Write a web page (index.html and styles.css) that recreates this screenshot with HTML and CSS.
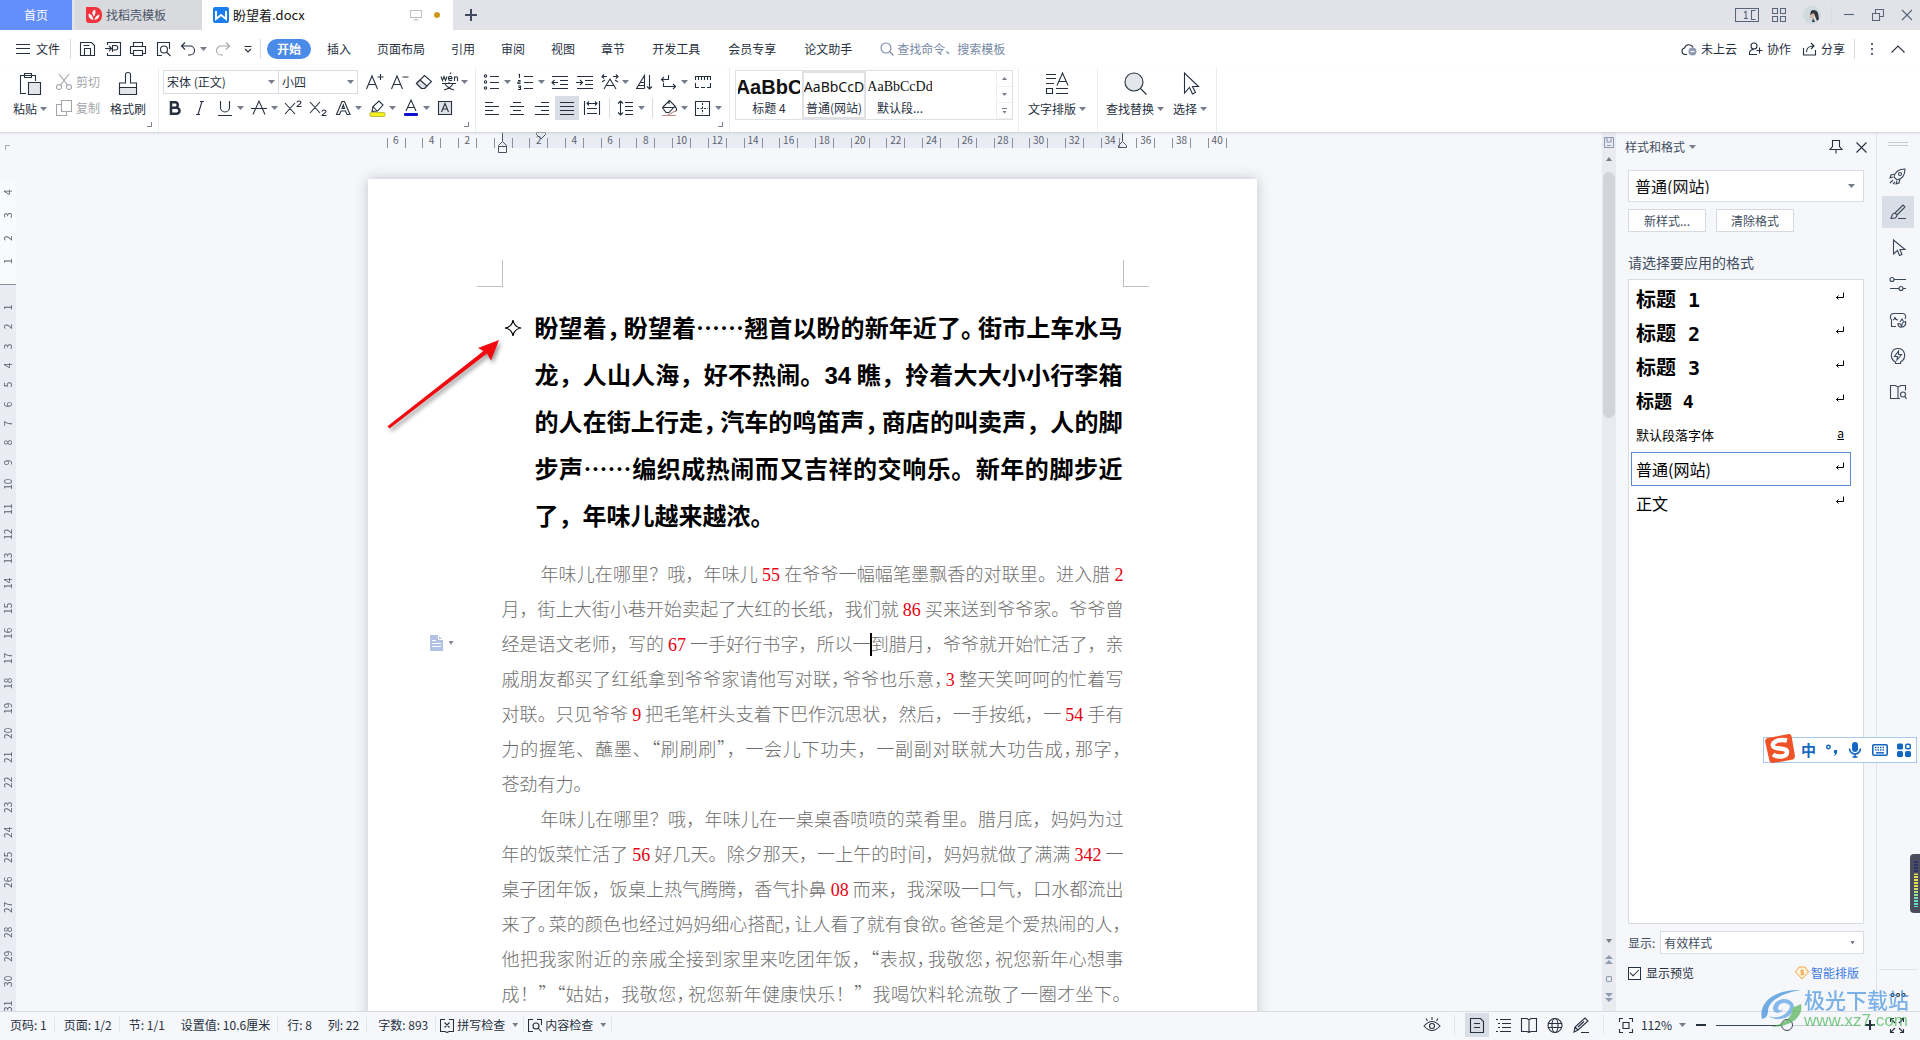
FILE: index.html
```html
<!DOCTYPE html>
<html lang="zh-CN">
<head>
<meta charset="utf-8">
<title>盼望着.docx</title>
<link rel="stylesheet" href="styles.css">
</head>
<body>
<svg class="defs" aria-hidden="true">
  <symbol id="ret" viewBox="0 0 10 10"><path d="M8.500 0.500V5.500H1.500M3.500 3.500L1.500 5.500L3.500 7.500"/></symbol>
</svg>

<header class="titlebar">
  <button class="tab home">首页</button>
  <button class="tab docer">
    <svg width="16" height="16" viewBox="0 0 16 16"><path fill="#f0323c" d="M0 0h9a7 7 0 0 1 7 7v2a7 7 0 0 1-7 7H3a3 3 0 0 1-3-3z"/><path fill="#fff" d="M7.500 13C2.500 12 2 8.500 3 6.500c2.500 1 4 3 4.500 6.500zM7 8C5.500 5.500 7 3.500 9 2.500c1 2 .5 5-1 7zM8.500 13c.5-3 2-4.500 5-5.500 0 3-2 5-5 5.500z"/></svg>
    找稻壳模板</button>
  <button class="tab doc">
    <svg width="16" height="16" viewBox="0 0 16 16"><rect width="16" height="16" rx="2" fill="#1a7df0"/><path d="M3 4v8l5-4 5 4V4" fill="none" stroke="#fff" stroke-width="2"/></svg>
    <span class="name">盼望着.docx</span>
    <svg width="12" height="12" viewBox="0 0 12 12" class="line pale"><path d="M.5 1.500h11v7H.5zM6 8.500v2M3.500 11h5"/></svg>
    <span class="unsaved"></span>
  </button>
  <button class="plus" aria-label="新建"><svg class="line" width="12" height="12" viewBox="0 0 12 12"><path stroke-width="2" d="M6 0v12M0 6h12"/></svg></button>
  <div class="window">
    <svg class="line w24" width="24" height="14" viewBox="0 0 24 14"><path d="M.5.5h23v13H.5zM20.500 2.500h-4v9h4M9 4.500l2-1v7M9 10.500h4"/></svg>
    <svg class="line" width="14" height="14" viewBox="0 0 14 14"><path d="M.5.5h5v5h-5zM8.500.5h5v5h-5zM.5 8.500h5v5h-5zM8.500 8.500h5v5h-5z"/></svg>
    <svg width="18" height="18" viewBox="0 0 18 18"><circle cx="9" cy="9" r="9" fill="#cfdbdd"/><path d="M8 5c2-2 6-1 7 2l1 6-2 2-2-5-2-2-3 1z" fill="#33343c"/><path d="M6 11l4-4 2 2-3 4z" fill="#dcb8a8"/><path d="M10 12l2 4H9z" fill="#33343c"/></svg>
    <span class="sep"></span>
    <button aria-label="最小化"><svg class="line" width="12" height="12" viewBox="0 0 12 12"><path d="M1 5.500h10"/></svg></button>
    <button aria-label="还原"><svg class="line" width="12" height="12" viewBox="0 0 12 12"><path d="M.5 4.500h7v7h-7zM3.500 4V.5h8v7H8"/></svg></button>
    <button aria-label="关闭"><svg class="line" width="12" height="12" viewBox="0 0 12 12"><path d="M1 1l10 10M11 1L1 11"/></svg></button>
  </div>
</header>

<nav class="menu">
  <button class="file"><svg class="line" width="14" height="12" viewBox="0 0 14 12"><path d="M0 1.500h14M0 5.500h14M0 10.500h14"/></svg>文件</button>
  <span class="sep"></span>
  <div class="quick">
    <button aria-label="保存"><svg class="i" viewBox="0 0 24 24"><path d="M4.500 5.500h11l3 3v10h-14zM8.500 18v-6.500h6V18M7.500 8.500h6"/></svg></button>
    <button aria-label="输出PDF"><svg class="i" viewBox="0 0 24 24"><path d="M6.500 8V5.500h13v13h-13V16M4 11.500h6M8 9l2.500 2.500L8 14M11.500 15V8.500h3a2 2 0 0 1 0 4.500h-3"/></svg></button>
    <button aria-label="打印"><svg class="i" viewBox="0 0 24 24"><path d="M7.500 9.500v-4h9v4M7.500 16.500h-3v-7h15v7h-3M7.500 13.500h9v5h-9z"/></svg></button>
    <button aria-label="打印预览"><svg class="i" viewBox="0 0 24 24"><path d="M11 18.500H6.500v-13h12V12"/><circle cx="13" cy="12.500" r="3.500"/><path d="M15.500 15l4 4"/></svg></button>
    <button aria-label="撤销"><svg class="i" viewBox="0 0 24 24"><path d="M9 5.500L5.500 9 9 12.500M6 9h8a4.500 4.500 0 0 1 0 9h-2"/></svg><i class="caret"></i></button>
    <button aria-label="恢复" class="off"><svg class="i" viewBox="0 0 24 24"><path d="M15 5.500L18.500 9 15 12.500M18 9h-8a4.500 4.500 0 0 0 0 9h2"/></svg></button>
    <button aria-label="自定义"><svg class="i" viewBox="0 0 24 24"><path d="M8.500 9.500h7M9 12l3 3 3-3"/></svg></button>
  </div>
  <span class="sep"></span>
  <button class="mt on">开始</button>
  <button class="mt">插入</button>
  <button class="mt">页面布局</button>
  <button class="mt">引用</button>
  <button class="mt">审阅</button>
  <button class="mt">视图</button>
  <button class="mt">章节</button>
  <button class="mt wide">开发工具</button>
  <button class="mt wide">会员专享</button>
  <button class="mt wide">论文助手</button>
  <label class="search"><svg class="line" width="14" height="14" viewBox="0 0 14 14"><circle cx="6" cy="6" r="5"/><path d="M10 10l3.500 3.500"/></svg><input type="text" placeholder="查找命令、搜索模板" aria-label="查找命令"></label>
  <div class="share">
    <button><svg class="line" width="16" height="14" viewBox="0 0 16 14"><path d="M6 12.500H4a3.300 3.300 0 0 1-.5-6.500A4.500 4.500 0 0 1 12 5.500"/><circle cx="11.500" cy="9.500" r="4" fill="#8f9bb0" stroke="none"/><path d="M9.500 9.500h4" stroke="#fff"/></svg>未上云</button>
    <button><svg class="line" width="15" height="14" viewBox="0 0 15 14"><circle cx="6" cy="4" r="3"/><path d="M9 12.500H1.500C1 9 3 7.500 6 7.500M11.500 5.500v6M8.500 8.500h6"/></svg>协作</button>
    <button><svg class="line" width="15" height="14" viewBox="0 0 15 14"><path d="M1.500 6v7h12V8M4.500 10c0-4 3-6 7-6M9 1l3 3-3 3"/></svg>分享</button>
    <span class="sep"></span>
    <button aria-label="更多" class="dots"><i></i><i></i><i></i></button>
    <button aria-label="收起"><svg class="line" width="14" height="10" viewBox="0 0 14 10"><path d="M.5 8.500L7 2l6.500 6.500"/></svg></button>
  </div>
</nav>

<section class="ribbon">
  <div class="group clip">
    <button class="big"><svg width="24" height="26" viewBox="0 0 24 26" class="line"><path d="M8 22.500H2.500v-18h15V10M6.500 2.500h7v4h-7z"/><path d="M10.500 11.500h12v12h-12z" fill="#e4e6eb"/></svg><span>粘贴<i class="caret"></i></span></button>
    <div class="pair">
      <button class="off"><svg class="line" width="16" height="16" viewBox="0 0 16 16"><circle cx="3" cy="13" r="2.500"/><circle cx="13" cy="13" r="2.500"/><path d="M4.500 11L13 0M11.500 11L3 0"/></svg>剪切</button>
      <button class="off"><svg class="line" width="16" height="16" viewBox="0 0 16 16"><path d="M5.500.5h10v11h-10zM5 4.500H.5v11h10V12"/></svg>复制</button>
    </div>
    <button class="big brush"><svg width="24" height="26" viewBox="0 0 24 26" class="line"><path d="M9.500 12V3.500q0-2 2.500-2t2.500 2V12h6v11.500h-17V12z"/><path d="M3.500 16.500h17v7h-17z" fill="#e4e6eb"/></svg><span>格式刷</span></button>
    <i class="launch"></i>
  </div>
  <div class="group">
    <div class="row">
      <span class="sel font"><select aria-label="字体"><option>宋体 (正文)</option></select><i class="caret"></i></span><span class="sel size"><select aria-label="字号"><option>小四</option></select><i class="caret"></i></span>
      <button aria-label="增大字号"><svg class="i" viewBox="0 0 24 24"><path d="M4.500 19L10 6l5.500 13M6.500 14.500h7M18.500 4v6M15.500 7h6"/></svg></button>
      <button aria-label="减小字号"><svg class="i" viewBox="0 0 24 24"><path d="M4.500 19L10 6l5.500 13M6.500 14.500h7M15.500 7h6"/></svg></button>
      <button aria-label="清除格式"><svg class="i" viewBox="0 0 24 24"><path d="M4.500 13.500l8-8 7 6-7 7h-3z"/><path d="M8 10l7 6-2.500 2.500h-3l-5-5z" fill="#e0e2e7"/></svg></button>
      <button aria-label="拼音"><svg class="i" viewBox="0 0 24 24"><path d="M4 6.500l1.500 4 1.500-4 1.500 4 1.500-4M11.500 8.500h3.500c0-3-3.500-3-3.500 0s3 2 3.500 1.500M17.500 11V6.500M17.500 8c1-2 3-1.500 3 0v3M13 4l1-1.500M5 13.500h14M12 12v1.500M8 14c2 3 5 5 9 6M16 14c-2 3-5 5-9 6"/></svg><i class="caret"></i></button>
    </div>
    <div class="row">
      <button aria-label="加粗"><svg class="i" viewBox="0 0 24 24"><path stroke-width="2.500" d="M8 6.300h4.500a2.800 2.800 0 0 1 0 5.500H8zM8 11.800h5.500a3 3 0 0 1 0 6H8z"/></svg></button>
      <button aria-label="倾斜"><svg class="i" viewBox="0 0 24 24"><path d="M12 5.500h4M8 18.500h4M14 5.500l-4 13"/></svg></button>
      <button aria-label="下划线"><svg class="i" viewBox="0 0 24 24"><path d="M7.500 5v6.500a4.500 4.500 0 0 0 9 0V5M5 19.500h14"/></svg><i class="caret"></i></button>
      <button aria-label="删除线"><svg class="i" viewBox="0 0 24 24"><path d="M6 18.500L12 5l6 13.500M4 12.500h16"/></svg><i class="caret"></i></button>
      <button aria-label="上标"><svg class="i" viewBox="0 0 24 24"><path d="M4 7l10 11M14 7L4 18M16 6.500c0-2 4-2 4 0 0 1.500-4 3-4 4h4.500"/></svg></button>
      <button aria-label="下标"><svg class="i" viewBox="0 0 24 24"><path d="M4 6l10 11M14 6L4 17M16 15.500c0-2 4-2 4 0 0 1.500-4 3-4 4h4.500"/></svg></button>
      <button aria-label="文字效果"><svg class="i" viewBox="0 0 24 24"><path d="M5.500 18.500L11 5.500h2.500l5.500 13h-3l-1.500-3.500H10l-1.500 3.500zM11 12.500h2.500L12.300 9z"/></svg><i class="caret"></i></button>
      <button aria-label="突出显示"><svg class="i" viewBox="0 0 24 24"><path d="M7 15.500l1-5 6-5.500 4 4-5.500 6zM8 10.500l4.500 5"/><rect x="5" y="16.500" width="15" height="4" rx="1" fill="#f5f018" stroke="#a8a830" stroke-width=".7"/></svg><i class="caret"></i></button>
      <button aria-label="字体颜色"><svg class="i" viewBox="0 0 24 24"><path d="M7 15L12 4l5 11M9 11.500h6"/><rect x="5" y="17" width="14" height="3" rx="1" fill="#1010d0" stroke="none"/></svg><i class="caret"></i></button>
      <button aria-label="字符底纹"><svg class="i" viewBox="0 0 24 24"><path d="M5.500 5.500h13v13h-13z" fill="#e0e2e7"/><path d="M8.500 16L12 7.500l3.500 8.500M10 13h4"/></svg></button>
    </div>
    <i class="launch"></i>
  </div>
  <div class="group paras">
    <div class="row">
      <button aria-label="项目符号"><svg class="i" viewBox="0 0 24 24"><circle cx="5.500" cy="6" r="1.200"/><circle cx="5.500" cy="12" r="1.200"/><circle cx="5.500" cy="18" r="1.200"/><path d="M10 6.500h9M10 12.500h9M10 18.500h9"/></svg><i class="caret"></i></button>
      <button aria-label="编号"><svg class="i" viewBox="0 0 24 24"><path d="M4.500 5l1-.5V8M4 10.500h2v1.500H4v1.500h2.500M4 16h2.500v3.500H4M4.500 17.500h2M10 6.500h9M10 12.500h9M10 18.500h9"/></svg><i class="caret"></i></button>
      <button aria-label="减少缩进"><svg class="i" viewBox="0 0 24 24"><path d="M4 6.500h16M12 10.500h8M12 14.500h8M4 18.500h16M10 12.500H4M6.500 10L4 12.500 6.500 15"/></svg></button>
      <button aria-label="增加缩进"><svg class="i" viewBox="0 0 24 24"><path d="M4 6.500h16M12 10.500h8M12 14.500h8M4 18.500h16M3 12.500h6M7 10l2.500 2.500L7 15"/></svg></button>
      <button aria-label="字符缩放"><svg class="i" viewBox="0 0 24 24"><path d="M6 19l6-10 6 10M8 15.500h8M4 6.500h5M6 4.500L4 6.500l2 2M20 6.500h-5M18 4.500l2 2-2 2M4 12l3-2M20 12l-3-2"/></svg><i class="caret"></i></button>
      <button aria-label="排序"><svg class="i" viewBox="0 0 24 24"><path d="M4.500 18.500l8-13v13M6.500 15.500h6M8.500 12.500h4M4 18.500h8.500M17.500 5v14M15 16.500l2.500 2.500 2.500-2.500"/></svg></button>
      <button aria-label="换行"><svg class="i" viewBox="0 0 24 24"><path d="M11.500 5v4.500h-7M7 7L4.500 9.500 7 12M6.500 13v3.500h12M16 14l2.500 2.500L16 19"/></svg><i class="caret"></i></button>
      <button aria-label="标尺"><svg class="i" viewBox="0 0 24 24"><path d="M4.500 10V6.500h15V10M7.500 7v3M10.500 7v3M13.500 7v3M16.500 7v3M4.500 13v4.500H8M19.500 13v4.500H16M10 17.500h4"/></svg></button>
    </div>
    <div class="row">
      <button aria-label="左对齐"><svg class="i" viewBox="0 0 24 24"><path d="M5 6.500h8M5 10.500h14M5 14.500h8M5 18.500h14"/></svg></button>
      <button aria-label="居中"><svg class="i" viewBox="0 0 24 24"><path d="M8 6.500h8M5 10.500h14M8 14.500h8M5 18.500h14"/></svg></button>
      <button aria-label="右对齐"><svg class="i" viewBox="0 0 24 24"><path d="M11 6.500h8M5 10.500h14M11 14.500h8M5 18.500h14"/></svg></button>
      <button aria-label="两端对齐" class="pressed"><svg class="i" viewBox="0 0 24 24"><path d="M5 6.500h14M5 10.500h14M5 14.500h14M5 18.500h14"/></svg></button>
      <button aria-label="分散对齐"><svg class="i" viewBox="0 0 24 24"><path d="M4.500 5v14M19.500 5v14M7 12.500h10M7 17.500h10M6.500 7.500H17M9 5.500L7 7.500l2 2M15 5.500l2 2-2 2"/></svg></button>
      <span class="vsep"></span>
      <button aria-label="行距"><svg class="i" viewBox="0 0 24 24"><path d="M6.500 5v14M4 7.500L6.500 5 9 7.500M4 16.500L6.500 19 9 16.500M11 6.500h8M11 10.500h8M11 14.500h8M11 18.500h8"/></svg><i class="caret"></i></button>
      <span class="vsep"></span>
      <button aria-label="底纹颜色"><svg class="i" viewBox="0 0 24 24"><path d="M5.500 11.500l7-7 5.500 5.500-6 6.500H9zM18 10.500c2 2 2 4 .5 5M6.500 11.500h11M12 4v4"/><path d="M5 19.500h5l9-5M5 19.500h14" stroke="#c0908c"/></svg><i class="caret"></i></button>
      <button aria-label="边框"><svg class="i" viewBox="0 0 24 24"><path d="M4.500 5.500h14v14h-14z"/><path d="M11.500 7v11M6 12.500h11" stroke-dasharray="2 1.500"/></svg><i class="caret"></i></button>
    </div>
    <i class="launch"></i>
  </div>
  <div class="group styles">
    <div class="gallery">
      <button class="h4"><b>AaBbC</b><span>标题 4</span></button>
      <button class="cur"><b>AaBbCcD</b><span>普通(网站)</span></button>
      <button class="para"><b>AaBbCcDd</b><span>默认段...</span></button>
      <div class="spin"><button aria-label="上一行"><i class="caret up"></i></button><button aria-label="下一行"><i class="caret"></i></button><button aria-label="展开"><i class="bar"></i><i class="caret"></i></button></div>
    </div>
  </div>
  <div class="group layout">
    <button class="big"><svg width="24" height="26" viewBox="0 0 24 26" class="line"><path d="M1 3.500h10M1 7.500h10M1 12.500h8M1.500 17.500h6v5h-6zM11 17.500h12M11 22.500h12M12 14.500L17.500 2 23 14.500M14 10.500h7"/></svg><span>文字排版<i class="caret"></i></span></button>
  </div>
  <div class="group find">
    <button class="big"><svg width="24" height="26" viewBox="0 0 24 26" class="line"><circle cx="11" cy="11" r="9" fill="#e4e6eb"/><path d="M17.500 17.500l6 6"/></svg><span>查找替换<i class="caret"></i></span></button>
    <button class="big"><svg width="24" height="26" viewBox="0 0 24 26" class="line"><path d="M6.500 2v20l5-5.500 3 6.500 3-1.500-3-6h6z"/></svg><span>选择<i class="caret"></i></span></button>
  </div>
</section>

<main class="work">
  <div class="vruler">
    <span class="corner"></span>
    <div class="neg"><span>4</span><span>3</span><span>2</span><span>1</span></div>
    <div class="pos"><span>1</span><span>2</span><span>3</span><span>4</span><span>5</span><span>6</span><span>7</span><span>8</span><span>9</span><span>10</span><span>11</span><span>12</span><span>13</span><span>14</span><span>15</span><span>16</span><span>17</span><span>18</span><span>19</span><span>20</span><span>21</span><span>22</span><span>23</span><span>24</span><span>25</span><span>26</span><span>27</span><span>28</span><span>29</span><span>30</span><span>31</span></div>
  </div>
  <div class="canvas">
    <div class="hruler">
      <span>6</span><span>4</span><span>2</span><span></span><span>2</span><span>4</span><span>6</span><span>8</span><span>10</span><span>12</span><span>14</span><span>16</span><span>18</span><span>20</span><span>22</span><span>24</span><span>26</span><span>28</span><span>30</span><span>32</span><span>34</span><span>36</span><span>38</span><span>40</span>
      <svg class="mark left" width="12" height="22" viewBox="0 0 12 22"><path d="M5.500 0v9M1.500 14.500v-1l4-4 4 4v7h-8v-6h8"/></svg>
      <svg class="mark first" width="12" height="10" viewBox="0 0 12 10"><path d="M1.500.5h9v2L6 7 1.500 2.500z"/></svg>
      <svg class="mark right" width="12" height="22" viewBox="0 0 12 22"><path d="M5.500 0v9M1.500 15.500v-2l4-4 4 4v2z"/></svg>
    </div>
    <article class="page">
      <div class="crops"><i></i><i></i></div>
      <div class="lead">
        <svg class="bullet" width="18" height="18" viewBox="0 0 18 18"><path d="M9 1q1 7 8 8-7 1-8 8-1-7-8-8 7-1 8-8z"/></svg>
        <h1>
          <span>盼望着<s>，</s>盼望着……翘首以盼的新年近了<s>。</s>街市上车水马</span>
          <span>龙，人山人海，好不热闹。<b>34</b> 瞧，拎着大大小小行李箱</span>
          <span>的人在街上行走<s>，</s>汽车的鸣笛声<s>，</s>商店的叫卖声，人的脚</span>
          <span>步声……编织成热闹而又吉祥的交响乐。新年的脚步近</span>
          <span class="end">了，年味儿越来越浓。</span>
        </h1>
      </div>
      <p>
        <span class="in">年味儿在哪里？哦，年味儿 <em>55</em> 在爷爷一幅幅笔墨飘香的对联里。进入腊 <em>2</em></span>
        <span>月，街上大街小巷开始卖起了大红的长纸，我们就 <em>86</em> 买来送到爷爷家。爷爷曾</span>
        <span>经是语文老师，写的 <em>67</em> 一手好行书字，所以一<i class="cursor"></i>到腊月，爷爷就开始忙活了，亲</span>
        <span>戚朋友都买了红纸拿到爷爷家请他写对联<s>，</s>爷爷也乐意<s>，</s><em>3</em> 整天笑呵呵的忙着写</span>
        <span>对联。只见爷爷 <em>9</em> 把毛笔杆头支着下巴作沉思状，然后，一手按纸，一 <em>54</em> 手有</span>
        <span>力的握笔、蘸墨、“刷刷刷”，一会儿下功夫，一副副对联就大功告成<s>，</s>那字<s>，</s></span>
        <span class="end">苍劲有力。</span>
      </p>
      <p>
        <span class="in">年味儿在哪里？哦，年味儿在一桌桌香喷喷的菜肴里。腊月底，妈妈为过</span>
        <span>年的饭菜忙活了 <em>56</em> 好几天。除夕那天，一上午的时间，妈妈就做了满满 <em>342</em> 一</span>
        <span>桌子团年饭，饭桌上热气腾腾，香气扑鼻 <em>08</em> 而来，我深吸一口气，口水都流出</span>
        <span>来了<s>。</s>菜的颜色也经过妈妈细心搭配<s>，</s>让人看了就有食欲<s>。</s>爸爸是个爱热闹的人<s>，</s></span>
        <span>他把我家附近的亲戚全接到家里来吃团年饭，“表叔<s>，</s>我敬您<s>，</s>祝您新年心想事</span>
        <span>成！”“姑姑，我敬您<s>，</s>祝您新年健康快乐！”我喝饮料轮流敬了一圈才坐下<s>。</s></span>
      </p>
      <div class="pmark"><svg width="13" height="16" viewBox="0 0 13 16"><path fill="#a9bcdf" d="M0 0h8l5 5v11H0z"/><path stroke="#fff" fill="none" d="M8.500 0v4.500H13M2 5.500h4M2 8.500h9M2 11.500h9"/></svg><i class="caret"></i></div>
      <svg class="arrow" width="130" height="104" viewBox="0 0 130 104"><path d="M7.500 92.200L103.500 17 98 14 119 6l-8 20.500-4-7L9.500 94.500z" fill="#f00a10"/></svg>
    </article>
  </div>
  <div class="scroll">
    <svg class="line" width="10" height="12" viewBox="0 0 10 12"><path d="M.5.5h9v10h-9zM3 1v4h4V1M3 8.500h4"/></svg>
    <i class="caret up"></i>
    <span class="thumb"></span>
    <i class="caret"></i>
    <svg width="8" height="10" viewBox="0 0 8 10"><path d="M4 0l4 4H0zM4 5l4 4H0z"/></svg>
    <svg class="line" width="8" height="8" viewBox="0 0 8 8"><rect x="1.500" y="1.500" width="5" height="5" rx="1"/></svg>
    <svg width="8" height="10" viewBox="0 0 8 10"><path d="M0 0h8L4 4zM0 5h8L4 9z"/></svg>
  </div>
  <aside class="panel">
    <div class="phead"><button>样式和格式<i class="caret"></i></button>
      <span><button aria-label="固定"><svg class="line" width="14" height="14" viewBox="0 0 14 14"><path d="M3.500.5h7v6l2.500 3H1l2.500-3zM7 10v3.500"/></svg></button><button aria-label="关闭窗格"><svg class="line" width="11" height="11" viewBox="0 0 11 11"><path d="M.5.5l10 10M10.500.5l-10 10"/></svg></button></span></div>
    <span class="sel current"><select aria-label="当前样式"><option>普通(网站)</option></select><i class="caret"></i></span>
    <div class="acts"><button>新样式...</button><button>清除格式</button></div>
    <h2>请选择要应用的格式</h2>
    <ul>
      <li class="t1">标题 1<svg class="ret"><use href="#ret"/></svg></li>
      <li class="t1">标题 2<svg class="ret"><use href="#ret"/></svg></li>
      <li class="t1">标题 3<svg class="ret"><use href="#ret"/></svg></li>
      <li class="t1 t4">标题 4<svg class="ret"><use href="#ret"/></svg></li>
      <li class="small">默认段落字体<u>a</u></li>
      <li class="picked">普通(网站)<svg class="ret"><use href="#ret"/></svg></li>
      <li>正文<svg class="ret"><use href="#ret"/></svg></li>
    </ul>
    <div class="show"><label for="show">显示:</label><span class="sel"><select id="show"><option>有效样式</option></select><i class="caret"></i></span></div>
    <div class="prev"><label><input type="checkbox" checked>显示预览</label>
      <a href="#"><svg width="14" height="14" viewBox="0 0 14 14"><path d="M4 1h6l3.500 5L7 13 .5 6z" fill="#fff3e0" stroke="#eda63c"/><path d="M9 4.500H6v2h2.500v2H5.500M7 3.500v6" fill="none" stroke="#eda63c"/></svg>智能排版</a></div>
  </aside>
  <aside class="rail">
    <i class="grip"></i>
    <button aria-label="快捷"><svg class="i" viewBox="0 0 24 24"><path d="M8 13c1-5 5-8 11-8 0 6-3 10-8 11zM9 10l-4 1-1 3 3-1M14 15l-1 4-3 1 1-3M4 19l3-3M7 20l2-2"/><circle cx="14" cy="10" r="1.500"/></svg></button>
    <button aria-label="样式" class="on"><svg class="i" viewBox="0 0 24 24"><path d="M9 13l8-8 2 2-8 8M9 13c-3 0-3 3-4 5.500 3 0 6 0 6-3.500zM12 18.500h8"/></svg></button>
    <button aria-label="选择"><svg class="i" viewBox="0 0 24 24"><path d="M7.500 4v14l4-3.500 2 5 2.500-1-2-5h5z"/></svg></button>
    <button aria-label="属性"><svg class="i" viewBox="0 0 24 24"><circle cx="6" cy="7.500" r="2"/><path d="M8 7.500h12M4 16.500h9M17 16.500h3"/><circle cx="15" cy="16.500" r="2"/></svg></button>
    <button aria-label="素材"><svg class="i" viewBox="0 0 24 24"><path d="M10 18.500H5.500V12C3.500 10 4 5.500 7.500 5.500h9c3 0 4 3 2.500 5.500M7 12q2-1 2-3 0 3 3 3M12 15.500c0 3 2 4 3.500 3.500 0-2-1-3.500-3.500-3.500zM15.500 19c0-3 1.500-5 4-5.500 1 3-1 5.500-4 5.500zM14 14l2-3 1.500 2.500"/></svg></button>
    <button aria-label="智能"><svg class="i" viewBox="0 0 24 24"><path d="M9.500 18c-7-4-4.500-13.500 2.500-13.500S21.500 14 14.500 18v1.500h-5zM12.500 7l-4 5.500h3L11 16l4.500-5.500h-3z"/></svg></button>
    <button aria-label="阅读"><svg class="i" viewBox="0 0 24 24"><path d="M14 18.500H4.500v-13H9l3 1.500 3-1.500h4.500v5M12 7v11"/><circle cx="17" cy="14.500" r="2.500"/><path d="M19 16.500l1.500 2.500"/></svg></button>
    <div class="foot"><svg class="line" width="16" height="6" viewBox="0 0 16 6"><circle cx="2.500" cy="3" r="1.500"/><circle cx="8" cy="3" r="1.500"/><circle cx="13.500" cy="3" r="1.500"/></svg></div>
  </aside>
</main>

<footer class="status">
  <span class="a">页码: 1</span><span class="a">页面: 1/2</span><span class="b">节: 1/1</span><span class="a">设置值: 10.6厘米</span><span class="b">行: 8</span><span class="a">列: 22</span><span class="a">字数: 893</span>
  <button><svg class="line" width="14" height="15" viewBox="0 0 14 15"><path d="M5 1.500H.5v12H5l2 1 2-1h4.500v-12H9M4.500 4.500l5 5M9.500 4.500l-5 5"/></svg>拼写检查<i class="caret"></i></button>
  <button><svg class="line" width="14" height="15" viewBox="0 0 14 15"><path d="M5 1.500H.5v12H5M9 1.500h4.500V7"/><circle cx="8" cy="8" r="3"/><path d="M10 10l3.500 4"/></svg>内容检查<i class="caret"></i></button>
  <div class="views">
    <button aria-label="护眼"><svg class="i" viewBox="0 0 24 24"><path d="M4 13q8-9 16 0-8 9-16 0zM12 4v3M6 5.500l1.500 2.500M18 5.500L16.500 8"/><circle cx="12" cy="13" r="2.500"/></svg></button>
    <span class="sep"></span>
    <button aria-label="页面视图" class="on"><svg class="i" viewBox="0 0 24 24"><path d="M5.500 5.500h10l3 3v11h-13zM9 10.500h6M9 14.500h6"/></svg></button>
    <button aria-label="大纲"><svg class="i" viewBox="0 0 24 24"><path d="M5 6.500h2M9 6.500h11M7 10.500h2M11 10.500h9M7 14.500h2M11 14.500h9M5 18.500h2M9 18.500h11"/></svg></button>
    <button aria-label="阅读版式"><svg class="i" viewBox="0 0 24 24"><path d="M4.500 5.500H10l2 1.500 2-1.500h5.500v13H14l-2 1-2-1H4.500zM12 7v12"/></svg></button>
    <button aria-label="Web版式"><svg class="i" viewBox="0 0 24 24"><circle cx="12" cy="12.500" r="7"/><ellipse cx="12" cy="12.500" rx="3" ry="7"/><path d="M5 10.500h14M5 14.500h14"/></svg></button>
    <button aria-label="写作模式"><svg class="i" viewBox="0 0 24 24"><path d="M5 19l1-5 10-9 3 3-10 9zM6 14l3 3M12 19.500h8M9 14l6-5.500"/></svg></button>
    <span class="sep"></span>
    <button aria-label="适合页面"><svg class="i" viewBox="0 0 24 24"><path d="M9 5.500H5.500V9M15 5.500h3.500V9M9 19.500H5.500V16M15 19.500h3.500V16M9 9.500h6v6H9z"/></svg></button>
    <button class="pct">112%<i class="caret"></i></button>
    <button aria-label="缩小" class="step"><svg class="line" width="10" height="10" viewBox="0 0 10 10"><path stroke-width="2" d="M0 5h10"/></svg></button>
    <input type="range" min="0" max="100" value="51" aria-label="缩放">
    <button aria-label="放大" class="step"><svg class="line" width="10" height="10" viewBox="0 0 10 10"><path stroke-width="2" d="M0 5h10M5 0v10"/></svg></button>
    <button aria-label="全屏"><svg class="i" viewBox="0 0 24 24"><path d="M5.500 9V5.500H9M5.500 5.500L10 10M18.500 9V5.500H15M18.500 5.500L14 10M5.500 16v3.500H9M5.500 19.500L10 15M18.500 16v3.500H15M18.500 19.500L14 15"/></svg></button>
  </div>
</footer>

<div class="ime">
  <svg class="logo" width="32" height="31" viewBox="0 0 32 31"><path d="M3.500 5L25 1q2 0 2.500 2L31 23q0 2.500-2 3.500L9 30q-3 0-3.500-2L1 8q0-2 2.500-3z" fill="#ef5226"/><path d="M23 7.500C15 5.500 8 9 9 13s14 1 14 6-9 6-14 2.500" fill="none" stroke="#fff" stroke-width="4.500"/></svg>
  <b>中</b>
  <svg width="14" height="14" viewBox="0 0 14 14"><circle cx="3.500" cy="4" r="1.700" fill="none" stroke="#1467c0" stroke-width="1.500"/><path d="M9 7h3q1 4-3 6 1-2 1-3H9z"/></svg>
  <svg width="14" height="16" viewBox="0 0 14 16"><rect x="4" width="6" height="10" rx="3"/><path d="M1.500 6.500a5.500 5.500 0 0 0 11 0M7 12v4M4.500 15h5" fill="none" stroke="#1467c0" stroke-width="1.600"/></svg>
  <svg width="16" height="14" viewBox="0 0 16 14"><rect x=".8" y="1.800" width="14.400" height="10.400" rx="1" fill="none" stroke="#1467c0" stroke-width="1.600"/><path d="M3 4.500h10M3 7h10" stroke="#1467c0" stroke-width="1.500" stroke-dasharray="1.500 1"/><path d="M4 9.800h8" stroke="#1467c0" stroke-width="1.500"/></svg>
  <svg width="14" height="14" viewBox="0 0 14 14"><rect y=".5" width="6" height="6" rx="1.500"/><rect x="8.700" y="1.200" width="4.600" height="4.600" rx="1.500" fill="none" stroke="#1467c0" stroke-width="1.500"/><rect y="8" width="6" height="6" rx="1.500"/><rect x="8" y="8" width="6" height="6" rx="1.500"/></svg>
</div>
<div class="meter"><i></i></div>
<div class="mark-site">
  <svg width="44" height="40" viewBox="0 0 44 40"><path d="M2 30C-2 14 14 0 41 1 22 4 8 12 8 22q0 7-6 8z" fill="#3d8fdc"/><path d="M9 27c9 4 20-2 21-10-4-5-11-3-12 2 0 3 3 3 5 1-1 4-9 6-10 0 0-8 9-12 16-9 8 4 6 13-2 17-6 3-14 3-18-1z" fill="#5ea2e4"/><path d="M41 15c3 11-8 23-30 23 15-4 22-11 21-19z" fill="#58b25c"/></svg>
  <div><b>极光下载站</b><span>www.xz7.com</span></div>
</div>
</body>
</html>
```
FILE: styles.css
```css
* { box-sizing: border-box; }
body {
  margin: 0; height: 100vh; min-width: 1400px; display: flex; flex-direction: column; overflow: hidden; position: relative;
  font: 12px/16px "Noto Sans CJK SC", "Noto Sans", sans-serif; color: #27303f; background: #f5f7fa;
}
button, select, input { font: inherit; color: inherit; }
button { border: 0; padding: 0; background: none; display: flex; align-items: center; white-space: nowrap; }
svg { flex: none; display: block; }
.defs { position: absolute; width: 0; height: 0; }
.i, .line { fill: none; stroke: currentColor; stroke-width: 1.1; }
.i { width: 24px; height: 24px; }
.caret { flex: none; width: 7px; height: 4px; background: #767d8a; clip-path: polygon(0 0, 100% 0, 50% 100%); }
.caret.up { clip-path: polygon(50% 0, 100% 100%, 0 100%); }
.sep { width: 1px; height: 20px; background: #d9dce2; }
.off { color: #a3a6ab; }

/* title bar */
.titlebar { flex: none; height: 30px; display: flex; background: #e1e3e8; }
.tab { height: 30px; gap: 4px; }
.home { width: 72px; justify-content: center; background: #638ffb; color: #fff; margin-right: 3px; }
.docer { width: 127px; padding-left: 11px; background: #d8dadd; color: #4a5568; }
.doc { width: 251px; padding: 0 13px 0 11px; background: #fff; color: #111; font-size: 13px; }
.doc .name { flex: 1; text-align: left; }
.pale { color: #bfc2c7; }
.unsaved { width: 6px; height: 6px; border-radius: 50%; background: #cf9a1a; margin-left: 8px; }
.plus { padding: 0 12px; color: #3f4a5e; }
.window { margin-left: auto; display: flex; align-items: center; gap: 17px; padding-right: 7px; color: #59647a; }
.window .w24 { margin-right: -4px; }
.window .sep { margin: 0 -6px 0 -7px; }

/* menu row */
.menu { flex: none; height: 38px; display: flex; align-items: center; background: #fff; }
.file { padding: 0 10px 0 16px; gap: 6px; }
.quick { display: flex; gap: 1px; padding: 0 0 0 5px; width: 189px; }
.quick .off { margin-left: 1px; }
.menu > .sep:nth-of-type(2) { margin-right: 6px; }
.mt { height: 20px; padding: 0 13px; }
.mt.wide { padding: 0 14px; }
.mt.on { padding: 0 10px; margin-right: 3px; border-radius: 10px; background: #4a8ae8; color: #fff; font-weight: 700; }
.search { display: flex; align-items: center; gap: 3px; margin-left: 14px; color: #7688a5; }
.search input { width: 130px; border: 0; padding: 0; outline: 0; background: none; }
.search input::placeholder { color: #7688a5; }
.share { margin-left: auto; display: flex; align-items: center; padding-right: 15px; gap: 11px; }
.share button { gap: 4px; }
.share .sep { margin-left: -2px; }
.share .dots { width: 14px; flex-direction: column; justify-content: center; gap: 3px; margin: 0 1px 0 -1px; }
.dots i { width: 2px; height: 2px; background: #59647a; }

/* ribbon */
.ribbon { flex: none; height: 64px; display: flex; background: #fff; box-shadow: 0 1px 2px #c9ccd2; z-index: 1; }
.group { position: relative; padding: 2px 5px 0 4px; border-right: 1px solid #eaecef; }
.clip { display: flex; width: 159px; padding-left: 13px; }
.row { display: flex; align-items: center; gap: 1px; height: 24px; margin-bottom: 2px; }
.row button { height: 24px; }
.row .caret, .quick .caret { margin-left: 0; margin-right: 2px; }
.row .pressed { background: #d9dde5; }
.vsep { width: 1px; height: 20px; margin: 0 3px 0 4px; background: #d9dce2; }
.launch { position: absolute; right: 6px; bottom: 5px; width: 5px; height: 5px; border: solid #7b8290; border-width: 0 1px 1px 0; }
.big { flex-direction: column; gap: 4px; padding-top: 1px; height: 50px; }
.big span { display: flex; align-items: center; gap: 2px; }
.big .caret { margin-left: 1px; }
.pair { display: flex; flex-direction: column; gap: 2px; margin: 0 10px 0 9px; }
.pair button { height: 24px; gap: 4px; }
.sel { position: relative; display: flex; align-items: center; border: 1px solid #d9dce2; background: #fff; }
.sel select { width: 100%; height: 100%; border: 0; outline: 0; background: none; appearance: none; padding: 0 3px; }
.sel .caret { position: absolute; right: 3px; margin: 0; }
.font { width: 116px; height: 24px; }
.size { width: 80px; height: 24px; margin: 0 3px 0 -2px; }
.styles { padding: 2px 5px 0 5px; }
.gallery { display: flex; height: 50px; width: 278px; border: 1px solid #dfe1e5; }
.gallery > button { flex-direction: column; justify-content: space-between; padding: 4px 0 1px; width: 64px; overflow: hidden; border: 2px solid transparent; }
.gallery b { font: 14px/20px "Noto Sans", sans-serif; color: #111; }
.gallery .h4 { width: 66px; }
.gallery .h4 b { font: bold 20px/20px "Liberation Sans", Arial, sans-serif; }
.gallery .cur { border-color: #dfe1e5; }
.gallery .para { width: 68px; }
.gallery .para b { font: 14px/20px "Liberation Serif", serif; }
.spin { margin-left: auto; width: 16px; display: flex; flex-direction: column; border-left: 1px solid #eceef1; }
.spin button { flex: 1; flex-direction: column; gap: 2px; justify-content: center; border-bottom: 1px solid #eceef1; }
.spin .caret { width: 5px; height: 3px; }
.bar { width: 5px; height: 1px; background: #767d8a; }
.ribbon > .layout { padding-left: 9px; padding-right: 11px; }
.ribbon > .find { display: flex; gap: 9px; padding: 2px 9px 0 8px; }

/* work area */
.work { flex: 1; min-height: 0; display: flex; }
.vruler { width: 16px; overflow: hidden; font-size: 10px; color: #59606e; display: flex; flex-direction: column; }
.corner { width: 5px; height: 5px; margin: 13px 0 30px 5px; flex: none; border: solid #aaa; border-width: 1px 0 0 1px; }
.neg { flex: none; height: 105px; padding-bottom: 11px; padding-top: 1px; display: grid; background: #f9fafc; border-bottom: 1px solid #8b929f; }
.pos { flex: none; display: grid; height: 736px; padding: 13px 0 2px; background: #e9ecf2; }
.vruler div span { writing-mode: vertical-rl; transform: rotate(180deg); text-align: center; line-height: 16px; }
.canvas { flex: 1; min-width: 0; overflow: hidden; display: flex; flex-direction: column; align-items: center; padding-left: 6px; }
.hruler { position: relative; flex: none; width: 889px; height: 16px; margin-bottom: 31px; padding: 0 13px 0 19px; display: grid; grid-template-columns: repeat(24, 1fr); font-size: 10px; line-height: 15px; color: #59606e; background: linear-gradient(90deg, #f5f7fa 134px, #e9ecf2 134px 755px, #f5f7fa 755px); }
.hruler span { position: relative; display: block; padding-right: 17px; text-align: center; background: linear-gradient(#8b929f, #8b929f) 0 6px / 1px 10px no-repeat, linear-gradient(#8b929f, #8b929f) 18px 6px / 1px 10px no-repeat; }
.mark { position: absolute; top: 0; fill: none; stroke: #4a5160; }
.mark.left { left: 129px; }
.mark.first { left: 167px; }
.mark.right { left: 749px; }
.page { position: relative; flex: none; width: 889px; min-height: 1200px; background: #fff; box-shadow: 0 0 12px #bfc3ca; padding-top: 81px; color: #000; }
.crops { display: flex; justify-content: space-between; padding: 0 108px 0 109px; margin-bottom: 16px; }
.crops i { width: 26px; height: 27px; border: solid #bfbfbf; border-width: 0 1px 1px 0; }
.crops i:last-child { border-width: 0 0 1px 1px; }
.lead { display: flex; padding: 0 134px 0 136px; }
.bullet { margin: 16px 13px 0 0; fill: none; stroke: #000; stroke-width: 1.2; }
h1 { flex: 1; margin: 0 0 18px; font: bold 24px/47px "Noto Sans CJK SC", sans-serif; }
h1 b { font-family: "Liberation Sans", Arial, sans-serif; line-height: 1; }
h1 span, .page p span { display: block; white-space: nowrap; text-align: justify; text-align-last: justify; }
h1 span { height: 47px; }
.page p span { height: 35px; }
h1 .end, .page p .end { text-align-last: left; }
s { text-decoration: none; font-feature-settings: "halt"; margin-right: 2px; }
h1 s { margin-right: 5px; }
.page p { margin: 0 133px 0 134px; font: 300 18px/35px "Noto Sans CJK SC", sans-serif; color: #6e6e6e; }
.page p .in { padding-left: 39px; }
em { font-style: normal; font-family: "Liberation Serif", serif; line-height: 1; color: #e60012; }
.cursor { display: inline-block; width: 2px; height: 23px; margin: 0 -1px; vertical-align: -5px; background: #000; }
.pmark { position: absolute; left: 62px; top: 456px; display: flex; align-items: center; gap: 6px; opacity: .9; }
.pmark .caret { width: 5px; }
.arrow { position: absolute; left: 12px; top: 155px; filter: drop-shadow(2px 3px 2px rgba(0, 0, 0, .4)); }
.scroll { width: 14px; display: flex; flex-direction: column; align-items: center; background: #e9ebf0; padding: 5px 0 8px; color: #8f9bb5; fill: #8f9bb5; }
.scroll > .caret.up { margin: 8px 0 11px; }
.thumb { width: 12px; height: 246px; border-radius: 6px; background: #d2d4d9; margin-bottom: auto; }
.scroll > .caret { width: 6px; margin-bottom: 12px; }
.scroll svg + svg { margin-top: 10px; }

/* style panel */
.panel { width: 261px; padding: 5px 12px 0; display: flex; flex-direction: column; border-right: 1px solid #dfe2e7; color: #414d61; }
.phead { display: flex; justify-content: space-between; align-items: center; height: 20px; margin: 0 -3px 13px; }
.phead button { gap: 4px; }
.phead span { display: flex; gap: 13px; color: #27303f; }
.current { height: 32px; font-size: 16px; color: #111; }
.current .caret, .show .caret { right: 8px; }
.show .caret { width: 5px; }
.current select { padding: 0 6px; }
.acts { display: flex; gap: 10px; margin: 7px 0 20px; }
.acts button { width: 78px; height: 23px; justify-content: center; border: 1px solid #d6d9df; background: #fff; }
h2 { margin: 0 0 7px; font-size: 14px; line-height: 20px; font-weight: 400; }
.panel ul { flex: 1; margin: 0 0 7px; padding: 2px 12px 0 2px; list-style: none; background: #fff; border: 1px solid #d9dce2; color: #000; font-size: 16px; }
.panel li { display: flex; justify-content: space-between; height: 34px; padding: 0 5px 0 4px; line-height: 32px; border: 1px solid transparent; white-space: pre; }
.panel .picked { border-color: #5b8bd0; }
.panel .t1 { font-family: "DejaVu Sans Mono", "Noto Sans CJK SC", monospace; font-size: 20px; line-height: 34px; font-weight: 700; }
.panel .t4 { font-size: 18px; }
.panel .small { font-size: 13px; }
.ret { width: 10px; height: 10px; margin-top: 9px; fill: none; stroke: #000; }
.panel li u { margin: -2px 1px 0; font-size: 12px; }
.show { display: flex; align-items: center; gap: 5px; }
.show .sel { flex: 1; height: 23px; }
.prev { display: flex; justify-content: space-between; align-items: center; height: 20px; margin: 9px 0 28px; padding-right: 5px; }
.prev label { display: flex; align-items: center; gap: 5px; color: #27303f; }
.prev input { appearance: none; margin: 0; width: 13px; height: 13px; border: 1px solid #27303f; background: #fff; display: grid; place-items: center; }
.prev input:checked::before { content: ""; width: 8px; height: 4px; border: solid #27303f; border-width: 0 0 1px 1px; transform: rotate(-45deg); margin-bottom: 3px; }
.prev a { display: flex; align-items: center; gap: 2px; color: #3c78e6; text-decoration: none; }
.rail { width: 43px; display: flex; flex-direction: column; align-items: center; gap: 4px; color: #3a465a; padding: 10px 2px 0 0; }
.grip { width: 20px; height: 4px; margin-bottom: 10px; border: solid #c9ccd2; border-width: 1px 0; }
.rail button { width: 32px; height: 32px; justify-content: center; }
.rail .on { background: #d9dde5; border-radius: 2px; }
.foot { margin-top: auto; height: 42px; width: 38px; padding: 22px 11px 0; border-top: 1px solid #dfe2e7; color: #222; }

/* status bar */
.status { flex: none; height: 29px; display: flex; align-items: center; border-top: 1px solid #d9dce2; background: #f5f7fa; padding: 0 0 2px 10px; }
.status > span { white-space: nowrap; margin-right: 9px; }
.status .a { padding-right: 7px; border-right: 1px solid #e3e5ea; }
.status .b { padding-right: 7px; }
.status > button { gap: 3px; padding-right: 3px; margin-right: 4px; border-right: 1px solid #e3e5ea; }
.status > .a:nth-of-type(7) { margin: 0 4px 0 2px; }
.status > button .caret { margin: 0 2px 0 4px; width: 6px; }
.views { margin-left: auto; display: flex; align-items: center; gap: 2px; padding-right: 11px; }
.views .sep { margin: 0 8px; background: #e3e5ea; }
.views .on { background: #d9dde5; }
.pct { gap: 7px; margin-left: 1px; }
.step { padding: 0 8px; }
.views input { appearance: none; width: 139px; height: 12px; margin: 0; background: linear-gradient(#3a465a, #3a465a) 0 6px / 65px 1px no-repeat, linear-gradient(#c9ccd2, #c9ccd2) 0 6px / 100% 1px no-repeat; }
.views input::-webkit-slider-thumb { appearance: none; width: 12px; height: 12px; border: 1px solid #3a465a; border-radius: 50%; background: #f5f7fa; }

/* floating widgets */
.ime { position: absolute; right: 3px; bottom: 277px; width: 154px; height: 26px; display: flex; align-items: center; justify-content: space-between; padding: 0 5px 0 37px; border: 1px solid #a8c8ef; background: #fff; fill: #1467c0; color: #1467c0; z-index: 2; }
.ime b { font-size: 15px; }
.ime .logo { position: absolute; left: 0; top: -5px; }
.meter { position: absolute; right: 0; bottom: 127px; width: 10px; height: 59px; border-radius: 4px 0 0 4px; background: #4a4e5c; padding: 7px 2px 6px 4px; z-index: 2; }
.meter i { display: block; height: 46px; background: repeating-linear-gradient(transparent 0 2px, #4a4e5c 2px 3px), linear-gradient(#2c3470 12px, #e3e052 13px 25px, #66dcc8 40px); }
.mark-site { position: absolute; right: 11px; bottom: 9px; display: flex; align-items: center; opacity: .72; z-index: 2; pointer-events: none; }
.mark-site b { display: block; font-size: 21px; line-height: 24px; font-weight: 500; color: #4a96e0; }
.mark-site span { display: block; font: 17px/20px "Liberation Sans", sans-serif; color: #4db85a; }
```
